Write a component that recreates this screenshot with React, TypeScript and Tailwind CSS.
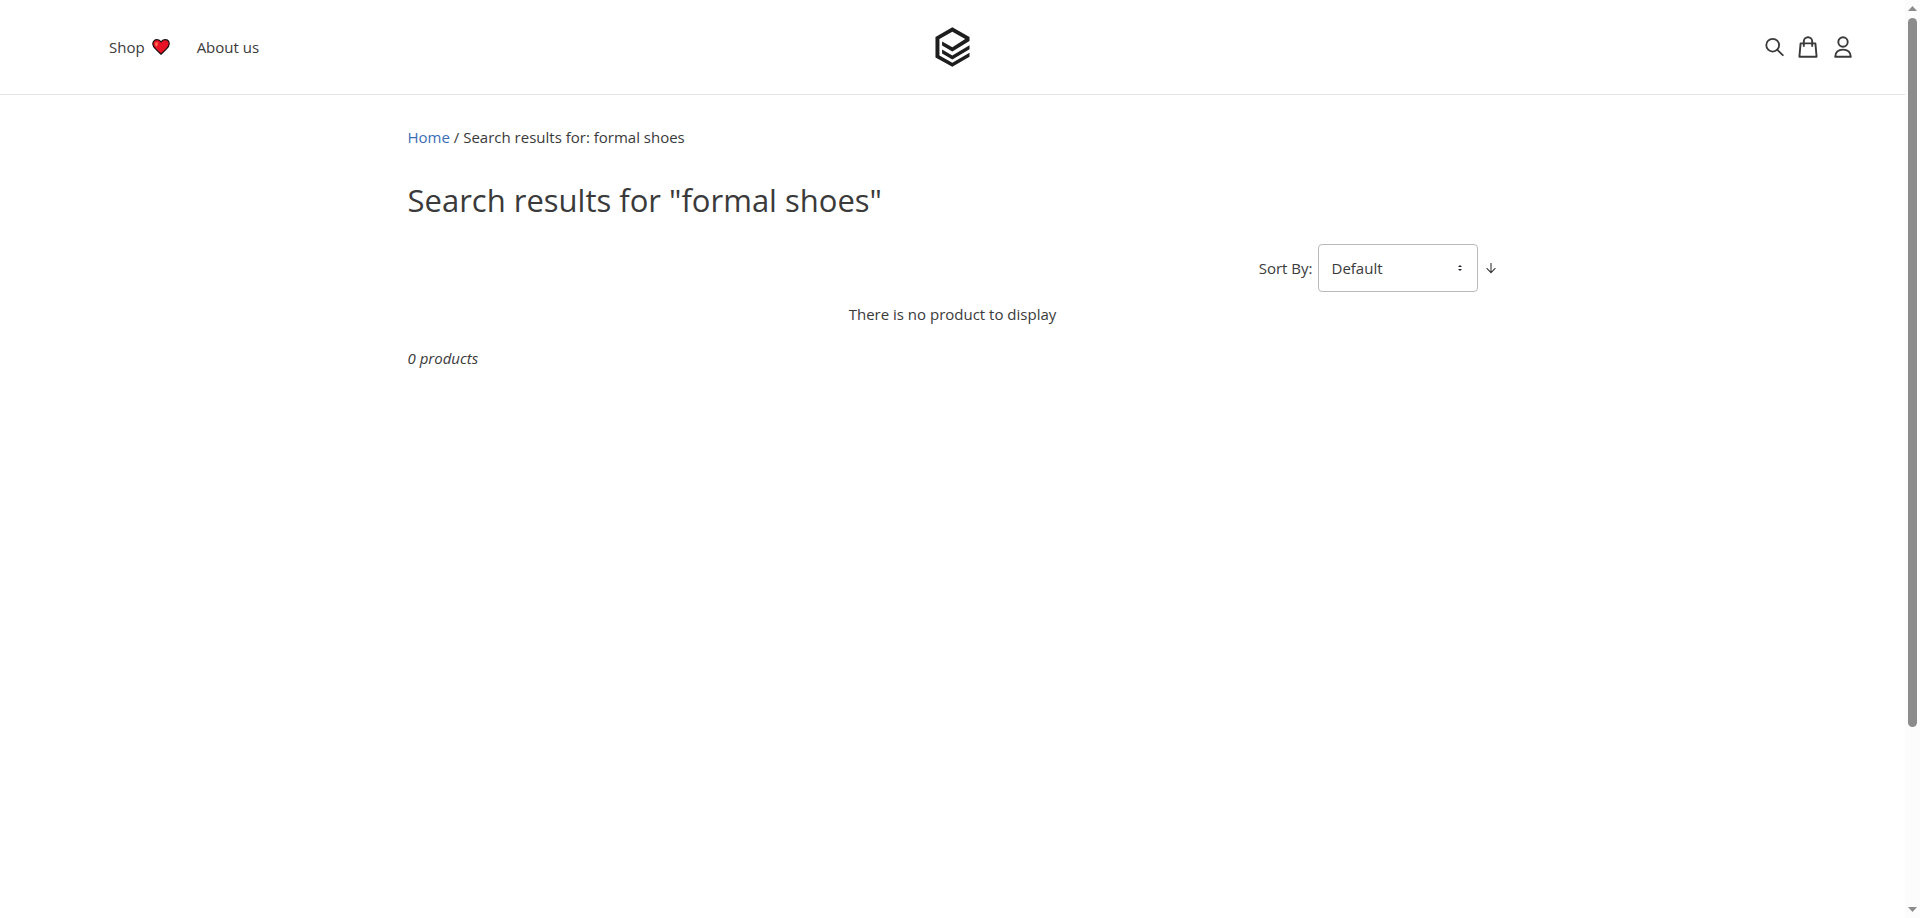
function HeartIcon() {
  return (
    <svg aria-hidden="true" className="h-4 w-[18px]" viewBox="0 0 18 16">
      <path
        d="M5 .7C2.6.7.8 2.500.8 4.900c0 2.200 1.300 3.700 3.200 5.500L9 15.200l5-4.800c1.900-1.800 3.200-3.300 3.200-5.500C17.200 2.500 15.400.7 13 .7c-1.700 0-3.200.9-4 2.300C8.200 1.600 6.700.7 5 .7z"
        fill="#e81224"
        stroke="#1a1010"
        strokeWidth="1.200"
        strokeLinejoin="round"
      />
      <path d="M3 5.300C3 3.700 4 2.900 5.300 2.900L6 4.800 4.600 7.800C3.600 7 3 6.200 3 5.300z" fill="#ff6b55" />
    </svg>
  );
}

function Logo() {
  return (
    <svg aria-hidden="true" className="h-10 w-[35px]" viewBox="74 50 105 121" fill="#1e1e1e">
      <path d="M126 51 178 80V92L126 124 95 106V94L126 111 165 86 126 64 87 86V136L126 158 178 128V140L126 170 75 142V80Z" />
      <path d="M95 118 126 136 178 105V117L126 148 95 130Z" />
    </svg>
  );
}

function SearchIcon() {
  return (
    <svg aria-hidden="true" className="h-5 w-5" viewBox="0 0 20 20" fill="none" stroke="#3a3a3a" strokeWidth="1.800">
      <circle cx="7.700" cy="8.200" r="6.400" />
      <path d="M12.200 12.700 17.800 18.200" strokeLinecap="round" />
    </svg>
  );
}

function BagIcon() {
  return (
    <svg aria-hidden="true" className="h-[22px] w-5" viewBox="0 0 20 22" fill="none" stroke="#3a3a3a" strokeWidth="1.900">
      <path d="M2.600 7.400H17.400L18.600 20.700H1.400Z" strokeLinejoin="round" />
      <path d="M5.800 10.800V5.400a4.200 4.200 0 0 1 8.400 0V10.800" />
    </svg>
  );
}

function UserIcon() {
  return (
    <svg aria-hidden="true" className="h-[22px] w-[18px]" viewBox="0 0 18 22" fill="none" stroke="#3a3a3a" strokeWidth="1.900">
      <circle cx="9" cy="6" r="4.700" />
      <path d="M1.200 20.700C1.500 16.200 4.500 13.600 9 13.600s7.500 2.600 7.800 7.100Z" strokeLinejoin="round" />
    </svg>
  );
}

function Header() {
  return (
    <header className="grid h-[95px] grid-cols-[1fr_auto_1fr] items-center border-b border-[#e5e5e5]">
      <nav className="flex items-center gap-[27px] pl-[109px]">
        <a href="#shop" className="flex items-center gap-[7px]">
          Shop <HeartIcon />
        </a>
        <a href="#about">About us</a>
      </nav>
      <a href="#home" aria-label="Home">
        <Logo />
      </a>
      <div className="flex items-center justify-end gap-4 pr-[53px]">
        <button type="button" aria-label="Search" className="-mr-[3px]">
          <SearchIcon />
        </button>
        <a href="#cart" aria-label="Cart">
          <BagIcon />
        </a>
        <a href="#account" aria-label="Account">
          <UserIcon />
        </a>
      </div>
    </header>
  );
}

function SortBar() {
  return (
    <div className="flex items-center justify-end pr-0.5">
      <label htmlFor="sort" className="mr-[5px]">
        Sort By:
      </label>
      <div className="grid w-40 items-center">
        <select
          id="sort"
          className="col-start-1 row-start-1 h-12 w-full appearance-none rounded border border-[#bababa] bg-white px-[13px]"
        >
          <option>Default</option>
        </select>
        <svg
          aria-hidden="true"
          className="pointer-events-none col-start-1 row-start-1 mr-4 h-1.5 w-1 justify-self-end"
          viewBox="0 0 4 6"
          fill="#20252a"
        >
          <path d="M2 0 0 2H4ZM2 6 0 4H4Z" />
        </svg>
      </div>
      <button type="button" aria-label="Sort direction" className="ml-2">
        <svg className="h-3 w-2.5" viewBox="0 0 10 12" fill="none" stroke="#3a3a3a" strokeWidth="1.100">
          <path d="M5 1V10.500M.6 6.200 5 10.600 9.400 6.200" />
        </svg>
      </button>
    </div>
  );
}

function ScrollTrack() {
  return (
    <div aria-hidden="true" className="sticky top-0 flex h-screen w-[15px] shrink-0 flex-col items-center bg-[#fcfcfc] py-1.5">
      <svg className="h-[5px] w-[9px]" viewBox="0 0 9 5" fill="#8b8b8b">
        <path d="M4.500 0 9 5H0Z" />
      </svg>
      <div className="mt-[7px] mb-[180px] w-[9px] flex-1 rounded-full bg-[#8b8b8b]" />
      <svg className="h-[5px] w-[9px]" viewBox="0 0 9 5" fill="#8b8b8b">
        <path d="M4.500 5 9 0H0Z" />
      </svg>
    </div>
  );
}

export default function App() {
  return (
    <div className="flex min-h-screen bg-white font-['Open_Sans','Noto_Sans',sans-serif] text-[15px] leading-6 text-[#3a3a3a]">
      <div className="min-w-0 flex-1">
        <Header />
        <main className="mx-auto max-w-[1090px] pt-[30px]">
          <nav aria-label="Breadcrumb">
            <a href="#home" className="text-[#3a6db5]">
              Home
            </a>
            <span> / </span>
            <span>Search results for: formal shoes</span>
          </nav>
          <h1 className="mt-[27px] text-[31px] leading-[48px]">Search results for "formal shoes"</h1>
          <div className="mt-5">
            <SortBar />
          </div>
          <p className="mt-2.5 text-center">There is no product to display</p>
          <p className="mt-5 italic">0 products</p>
        </main>
      </div>
      <ScrollTrack />
    </div>
  );
}
